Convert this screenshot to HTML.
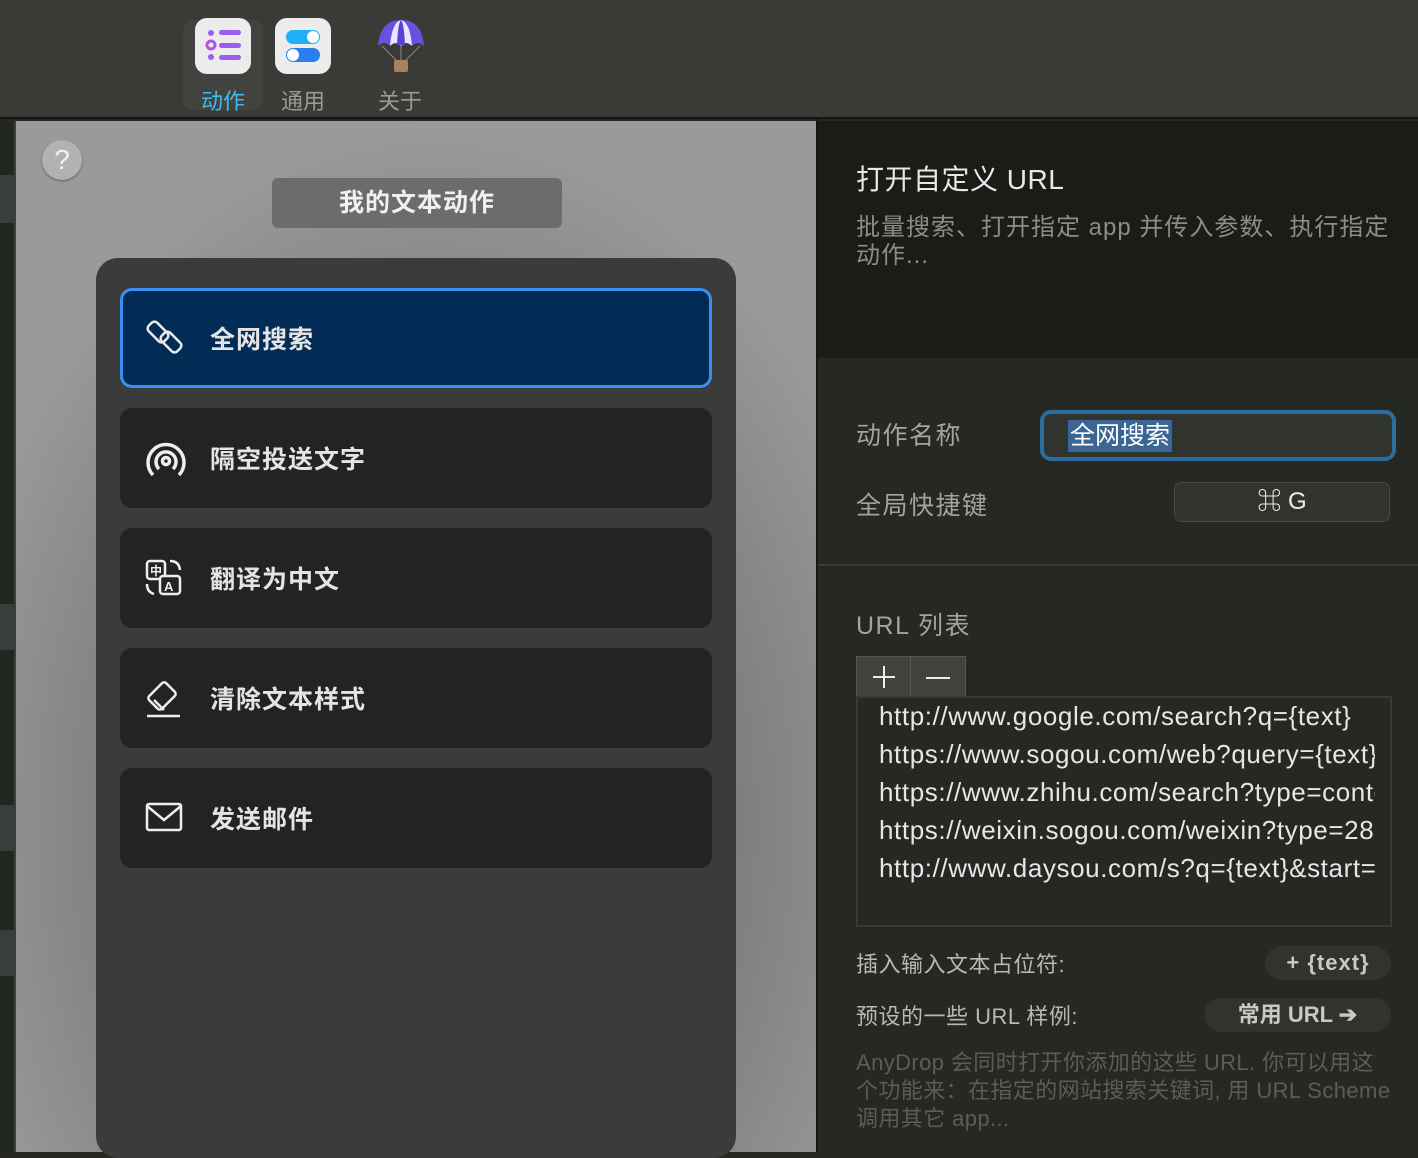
<!DOCTYPE html>
<html><head><meta charset="utf-8"><style>
*{margin:0;padding:0;box-sizing:border-box}
body{width:1418px;height:1152px;overflow:hidden;background:#252823;font-family:"Liberation Sans","Noto Sans CJK SC",sans-serif;position:relative}
.a{position:absolute}
.tb{left:0;top:0;width:1418px;height:119px;background:#3a3b37;border-bottom:2px solid #151614}
.ti{width:56px;height:56px;border-radius:12px;background:#ececec}
.tl{font-size:22px;color:#9a9a97;text-align:center}
.item{left:120px;width:592px;height:100px;border-radius:12px;background:#232323;color:#e4e4e4;font-size:25px;font-weight:bold;letter-spacing:1px}
.item span{position:absolute;left:90px;top:32px}
.item svg{position:absolute;left:24px;top:30px}
.lbl{color:#a3a49f;font-size:25px;letter-spacing:1.5px}
.url{left:879px;font-size:26px;letter-spacing:0.6px;color:#e6e6e6;white-space:nowrap;width:496px;overflow:hidden}
</style></head><body>
<div class="a tb"></div>
<div class="a" style="left:183px;top:20px;width:80px;height:90px;border-radius:10px;background:#42433f"></div>
<div class="a ti" style="left:195px;top:18px">
<svg width="56" height="56" viewBox="0 0 56 56"><g fill="#9b5cf0"><circle cx="16" cy="15" r="3"/><circle cx="16" cy="27" r="4" fill="none" stroke="#b055e8" stroke-width="3"/><circle cx="16" cy="39" r="3"/><rect x="24" y="12" width="22" height="5" rx="2.5"/><rect x="24" y="25" width="22" height="5" rx="2.5"/><rect x="24" y="37" width="22" height="5" rx="2.5"/></g></svg></div>
<div class="a tl" style="left:183px;top:84px;width:80px;color:#3bbcf0">动作</div>
<div class="a ti" style="left:275px;top:18px">
<svg width="56" height="56" viewBox="0 0 56 56"><rect x="11" y="12" width="34" height="14" rx="7" fill="#1fb0f5"/><circle cx="38" cy="19" r="6" fill="#fff"/><rect x="11" y="30" width="34" height="14" rx="7" fill="#2a7ef0"/><circle cx="18" cy="37" r="6" fill="#fff"/></svg></div>
<div class="a tl" style="left:263px;top:84px;width:80px">通用</div>
<svg class="a" style="left:376px;top:18px" width="50" height="56" viewBox="0 0 50 56"><path d="M2 28 Q4 2 25 2 Q46 2 48 28 Q42 22 36 28 Q30 22 25 28 Q20 22 14 28 Q8 22 2 28Z" fill="#6a4fe0"/><path d="M14 28 Q16 4 25 2 Q34 4 36 28 Q30 22 25 28 Q20 22 14 28Z" fill="#eae6ff"/><path d="M21 27 Q22 5 25 2 Q28 5 29 27Z" fill="#5a3fd8"/><path d="M6 28 L22 44 M44 28 L28 44 M25 28 L25 44" stroke="#888" stroke-width="1"/><rect x="18" y="42" width="14" height="12" rx="2" fill="#a8825e"/></svg>
<div class="a tl" style="left:360px;top:84px;width:80px">关于</div>

<div class="a" style="left:0;top:121px;width:14px;height:1031px;background:#222620"></div>
<div class="a" style="left:0;top:175px;width:14px;height:48px;background:#3a3e3a"></div>
<div class="a" style="left:0;top:604px;width:14px;height:46px;background:#3a3e3a"></div>
<div class="a" style="left:0;top:805px;width:14px;height:46px;background:#3a3e3a"></div>
<div class="a" style="left:0;top:930px;width:14px;height:46px;background:#3a3e3a"></div>
<div class="a" style="left:14px;top:121px;width:2px;height:1031px;background:#3d3d3d"></div>
<div class="a" style="left:16px;top:121px;width:800px;height:1031px;background:radial-gradient(ellipse 500px 700px at 416px 700px,#555 0%,#7a7a7a 55%,#9a9a9a 100%)"></div>
<div class="a" style="left:42px;top:140px;width:40px;height:40px;border-radius:50%;background:#b2b2b2;box-shadow:0 1px 2px rgba(0,0,0,.4);color:#f2f2f2;font-size:28px;text-align:center;line-height:40px">?</div>
<div class="a" style="left:272px;top:178px;width:290px;height:50px;border-radius:6px;background:#6c6c6c;color:#f0f0f0;font-size:25px;font-weight:bold;text-align:center;line-height:50px;letter-spacing:1px">我的文本动作</div>
<div class="a" style="left:96px;top:258px;width:640px;height:900px;border-radius:22px;background:#3b3b3b"></div>

<div class="a item" style="top:288px;background:#022c55;border:3px solid #3a8ff0"><svg width="44" height="40" viewBox="0 0 44 40" style="left:21px;top:27px" fill="none" stroke="#e8e8e8" stroke-width="2.5"><rect x="3" y="8" width="22" height="12" rx="4" transform="rotate(45 14 14)"/><rect x="16" y="18" width="22" height="12" rx="4" transform="rotate(45 27 24)"/></svg><span style="left:87px;top:29px">全网搜索</span></div>
<div class="a item" style="top:408px"><svg width="44" height="44" viewBox="0 0 44 44" fill="none" stroke="#eee" stroke-width="3.5"><path d="M9 37 A18 18 0 1 1 35 37"/><path d="M15 31 A10 10 0 1 1 29 31"/><circle cx="22" cy="23" r="3.5"/></svg><span>隔空投送文字</span></div>
<div class="a item" style="top:528px"><svg width="40" height="40" viewBox="0 0 40 40" fill="none" stroke="#eee" stroke-width="2.5"><rect x="3" y="3" width="18" height="18" rx="3"/><text x="6" y="17" font-size="12" fill="#eee" stroke="none" font-weight="bold" font-family="Noto Sans CJK SC">中</text><rect x="16" y="18" width="20" height="18" rx="3" fill="#232323"/><text x="20" y="33" font-size="13" fill="#eee" stroke="none" font-weight="bold" font-family="Liberation Sans">A</text><path d="M3 26 Q3 34 10 36 M26 3 Q35 3 36 12"/></svg><span>翻译为中文</span></div>
<div class="a item" style="top:648px"><svg width="40" height="40" viewBox="0 0 40 40" fill="none" stroke="#eee" stroke-width="2.5"><rect x="9" y="6" width="18" height="24" rx="3" transform="rotate(45 18 18)"/><path d="M10 22 L20 32"/><path d="M3 38 H36"/></svg><span>清除文本样式</span></div>
<div class="a item" style="top:768px"><svg width="40" height="40" viewBox="0 0 40 40" fill="none" stroke="#eee" stroke-width="2.5"><rect x="3" y="6" width="34" height="26" rx="2"/><path d="M3 8 L20 22 L37 8"/></svg><span>发送邮件</span></div>

<div class="a" style="left:816px;top:119px;width:2px;height:1033px;background:#151613"></div>
<div class="a" style="left:818px;top:121px;width:600px;height:237px;background:#1a1c18"></div>
<div class="a" style="left:856px;top:158px;font-size:28px;color:#e8e8e8;letter-spacing:0.5px">打开自定义 URL</div>
<div class="a" style="left:856px;top:214px;width:560px;font-size:24px;color:#8c8d89;line-height:28px;letter-spacing:1px;white-space:nowrap">批量搜索、打开指定 app 并传入参数、执行指定<br>动作...</div>
<div class="a lbl" style="left:856px;top:416px">动作名称</div>
<div class="a" style="left:1040px;top:410px;width:356px;height:51px;border-radius:11px;border:4px solid #2a6ea0;background:#30332e"></div>
<div class="a" style="left:1068px;top:420px;height:32px;padding:0 2px;background:#3b6594;color:#fff;font-size:25px;line-height:32px">全网搜索</div>
<div class="a lbl" style="left:856px;top:486px">全局快捷键</div>
<div class="a" style="left:1174px;top:482px;width:216px;height:40px;border-radius:7px;background:#30332e;border:1px solid #474a44;color:#eee;font-size:24px;text-align:center;line-height:38px">⌘ G</div>
<div class="a" style="left:818px;top:564px;width:600px;height:2px;background:#3a3c38"></div>
<div class="a lbl" style="left:856px;top:606px">URL 列表</div>
<div class="a" style="left:856px;top:656px;width:110px;height:42px;background:#40433e;border:1px solid #555"></div>
<div class="a" style="left:910px;top:656px;width:1px;height:42px;background:#5a5a5a"></div>
<div class="a" style="left:873px;top:676px;width:22px;height:2px;background:#eee"></div>
<div class="a" style="left:883px;top:666px;width:2px;height:22px;background:#eee"></div>
<div class="a" style="left:926px;top:677px;width:24px;height:2px;background:#eee"></div>
<div class="a" style="left:856px;top:696px;width:536px;height:231px;border:2px solid #373a35"></div>
<div class="a url" style="top:701px">http://www.google.com/search?q={text}</div>
<div class="a url" style="top:739px">https://www.sogou.com/web?query={text}</div>
<div class="a url" style="top:777px">https://www.zhihu.com/search?type=content</div>
<div class="a url" style="top:815px">https://weixin.sogou.com/weixin?type=28</div>
<div class="a url" style="top:853px">http://www.daysou.com/s?q={text}&amp;start=</div>
<div class="a" style="left:856px;top:947px;font-size:22px;color:#b8b9b4;letter-spacing:0.5px">插入输入文本占位符:</div>
<div class="a" style="left:1265px;top:946px;width:126px;height:34px;border-radius:17px;background:#30332e;color:#c8c8c4;font-size:22px;font-weight:bold;text-align:center;line-height:34px;letter-spacing:1px">+ {text}</div>
<div class="a" style="left:856px;top:999px;font-size:22px;color:#b8b9b4;letter-spacing:0.5px">预设的一些 URL 样例:</div>
<div class="a" style="left:1204px;top:998px;width:187px;height:34px;border-radius:17px;background:#30332e;color:#c8c8c4;font-size:22px;font-weight:bold;text-align:center;line-height:34px">常用 URL ➔</div>
<div class="a" style="left:856px;top:1049px;width:540px;font-size:22px;color:#5b5d58;line-height:28px;letter-spacing:0.4px">AnyDrop 会同时打开你添加的这些 URL. 你可以用这<br>个功能来：在指定的网站搜索关键词, 用 URL Scheme<br>调用其它 app...</div>
</body></html>
